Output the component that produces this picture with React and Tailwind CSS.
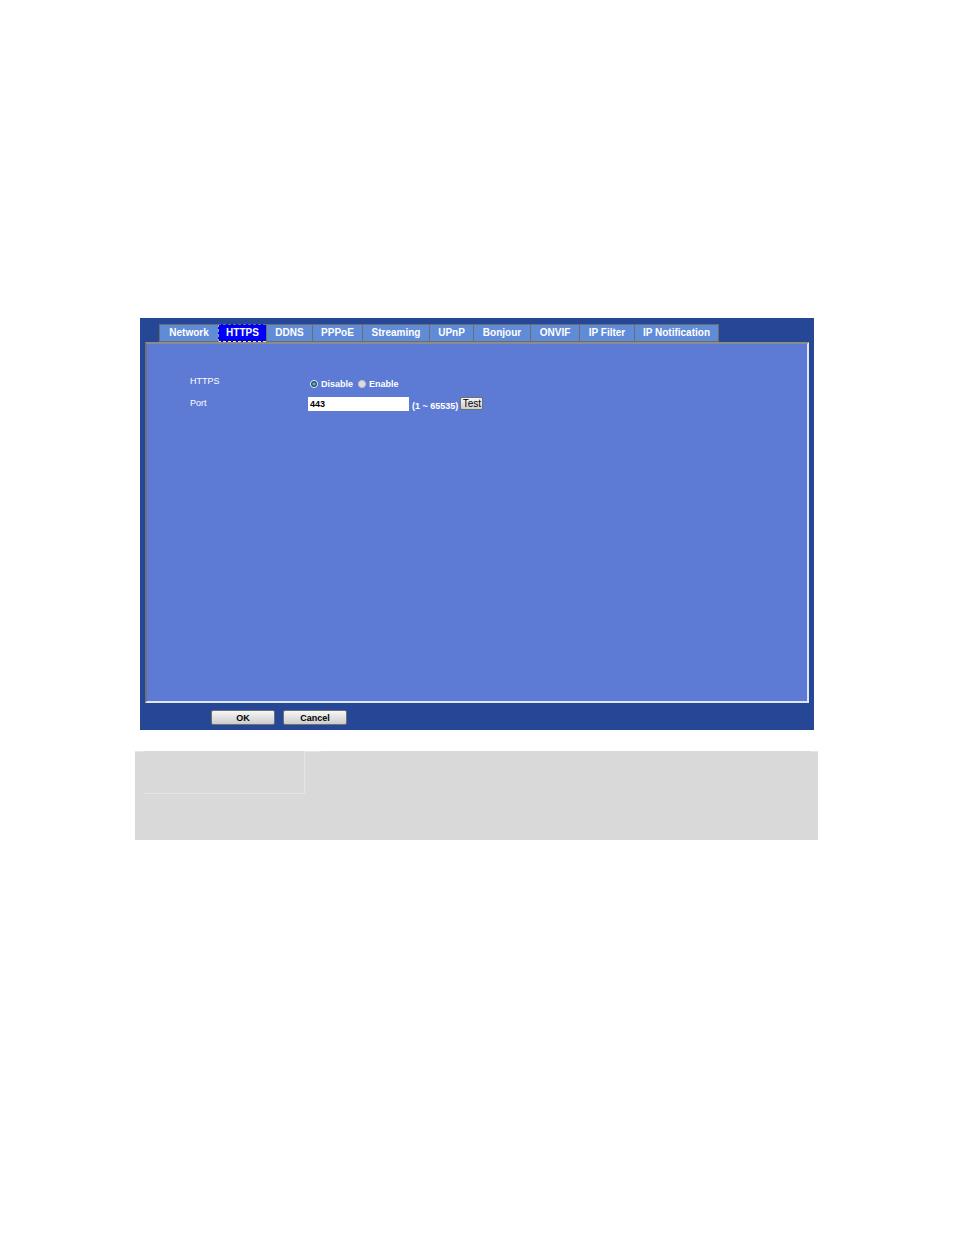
import { useState } from "react"
import clsx from "clsx"

const tabs = [
  "Network",
  "HTTPS",
  "DDNS",
  "PPPoE",
  "Streaming",
  "UPnP",
  "Bonjour",
  "ONVIF",
  "IP Filter",
  "IP Notification",
]

const buttonStyle =
  "rounded-[2px] border border-[#707070] bg-linear-to-b from-[#f6f6f6] to-[#cdcdcd] text-black"

const Tabs = ({ active, onSelect }) => (
  <nav className="ml-[19px] grid grid-cols-[59px_48px_46px_50px_67px_44px_57px_49px_55px_85px]">
    {tabs.map((tab) => (
      <button
        key={tab}
        type="button"
        onClick={() => onSelect(tab)}
        className={clsx(
          "h-[18px] border-y border-l text-[10px] leading-4 font-bold whitespace-nowrap text-white last:border-r",
          active === tab
            ? "border-dashed border-t-[#6b6d72] border-b-[#ffff00] border-l-[#a5a67a] bg-[#0000fa]"
            : "border-[#6b6d72] bg-[#5f8bd7]"
        )}
      >
        {tab}
      </button>
    ))}
  </nav>
)

const Radio = ({ id, label, checked, onChange }) => (
  <div className="flex items-center gap-[3px]">
    <input
      id={id}
      type="radio"
      name="https"
      checked={checked}
      onChange={onChange}
      className="size-2 appearance-none rounded-full border border-[#c4c6c9] bg-[#dcdcdc] checked:border-[#e4eaf0] checked:bg-[radial-gradient(circle,#4fb5dc_20%,#16354f_60%)]"
    />
    <label htmlFor={id}>{label}</label>
  </div>
)

const App = () => {
  const [tab, setTab] = useState("HTTPS")
  const [enabled, setEnabled] = useState(false)
  const [port, setPort] = useState("443")

  return (
    <main className="min-h-screen bg-white pt-[318px] font-['Liberation_Sans',Arial,sans-serif] text-[9px] leading-3 text-white">
      <section className="mx-[140px] bg-[#264796] pt-1.5">
        <Tabs active={tab} onSelect={setTab} />
        <div className="mx-[5px] border-2 border-t-[#8b8c8e] border-r-[#dfe7f5] border-b-[#dfe7f5] border-l-[#6f7178]">
          <form className="grid min-h-[357px] grid-cols-[118px_1fr] content-start gap-y-1 bg-[#5d7bd5] pt-[31px] pl-[43px]">
            <div>HTTPS</div>
            <div className="flex h-[18px] items-start gap-[5px] pt-[3px] pl-0.5 font-bold">
              <Radio
                id="disable"
                label="Disable"
                checked={!enabled}
                onChange={() => setEnabled(false)}
              />
              <Radio
                id="enable"
                label="Enable"
                checked={enabled}
                onChange={() => setEnabled(true)}
              />
            </div>
            <label htmlFor="port">Port</label>
            <div className="flex items-start font-bold">
              <input
                id="port"
                type="text"
                value={port}
                onChange={(e) => setPort(e.target.value)}
                className="h-3.5 w-[101px] bg-white px-0.5 text-black"
              />
              <span className="ml-[3px] pt-[3px]">(1 ~ 65535)</span>
              <button
                type="button"
                className={clsx(
                  buttonStyle,
                  "ml-0.5 h-[13px] w-[23px] text-[10px] leading-none font-normal"
                )}
              >
                Test
              </button>
            </div>
          </form>
        </div>
        <div className="flex gap-2 pt-[7px] pb-[5px] pl-[71px]">
          <button type="button" className={clsx(buttonStyle, "h-[15px] w-16 font-bold")}>
            OK
          </button>
          <button type="button" className={clsx(buttonStyle, "h-[15px] w-16 font-bold")}>
            Cancel
          </button>
        </div>
      </section>

      {/* empty note block under the settings window */}
      <section className="mr-[136px] ml-[135px] mt-[21px] flex h-[89px] items-start bg-[#d9d9d9]">
        <div className="w-[9px] border-t border-[#e5e5e5]" />
        <div className="h-[43px] w-[161px] border-r border-b border-[#e5e5e5]" />
        <div className="w-4 border-t border-[#e5e5e5]" />
        <div className="ml-auto w-2 border-t border-[#e5e5e5]" />
      </section>
    </main>
  )
}

export default App
